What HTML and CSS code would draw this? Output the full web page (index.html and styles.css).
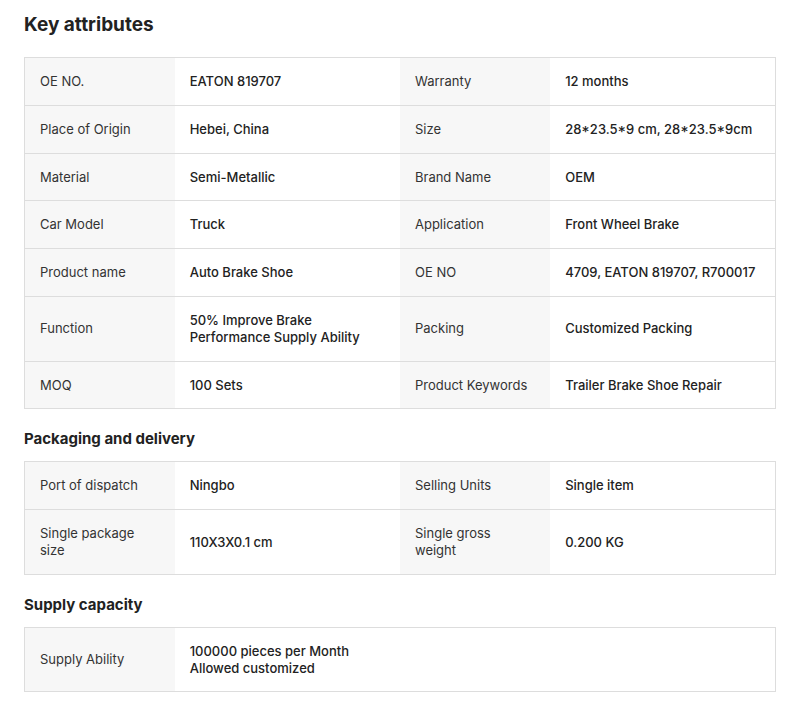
FILE: index.html
```html
<!DOCTYPE html>
<html>
<head>
<meta charset="utf-8">
<link rel="stylesheet" href="styles.css">
</head>
<body>
<div class="page">
  <h1 class="title">Key attributes</h1>
  <table class="attrs">
    <colgroup><col class="c-label"><col class="c-value"><col class="c-label"><col class="c-value"></colgroup>
    <tr><td class="label">OE NO.</td><td class="value">EATON 819707</td><td class="label">Warranty</td><td class="value">12 months</td></tr>
    <tr><td class="label">Place of Origin</td><td class="value">Hebei, China</td><td class="label">Size</td><td class="value">28*23.5*9 cm, 28*23.5*9cm</td></tr>
    <tr><td class="label">Material</td><td class="value">Semi-Metallic</td><td class="label">Brand Name</td><td class="value">OEM</td></tr>
    <tr><td class="label">Car Model</td><td class="value">Truck</td><td class="label">Application</td><td class="value">Front Wheel Brake</td></tr>
    <tr><td class="label">Product name</td><td class="value">Auto Brake Shoe</td><td class="label">OE NO</td><td class="value">4709, EATON 819707, R700017</td></tr>
    <tr><td class="label">Function</td><td class="value">50% Improve Brake Performance Supply Ability</td><td class="label">Packing</td><td class="value">Customized Packing</td></tr>
    <tr><td class="label">MOQ</td><td class="value">100 Sets</td><td class="label">Product Keywords</td><td class="value">Trailer Brake Shoe Repair</td></tr>
  </table>

  <h2 class="section">Packaging and delivery</h2>
  <table class="attrs">
    <colgroup><col class="c-label"><col class="c-value"><col class="c-label"><col class="c-value"></colgroup>
    <tr><td class="label">Port of dispatch</td><td class="value">Ningbo</td><td class="label">Selling Units</td><td class="value">Single item</td></tr>
    <tr><td class="label">Single package size</td><td class="value">110X3X0.1 cm</td><td class="label">Single gross weight</td><td class="value">0.200 KG</td></tr>
  </table>

  <h2 class="section">Supply capacity</h2>
  <table class="attrs">
    <colgroup><col class="c-label"><col class="c-value-wide"></colgroup>
    <tr><td class="label">Supply Ability</td><td class="value">100000 pieces per Month<br>Allowed customized</td></tr>
  </table>
</div>
</body>
</html>
```
FILE: styles.css
```css
html, body {
  margin: 0;
  padding: 0;
  background: #fff;
}
body {
  font-family: Inter, "Noto Sans", "Liberation Sans", sans-serif;
  color: #222;
}
.page {
  padding: 11px 15px 0 24px;
}
.title {
  margin: 0 0 18px;
  font-size: 19px;
  line-height: 28px;
  font-weight: 700;
  color: #222;
}
.section {
  margin: 20px 0 12px;
  font-size: 15px;
  line-height: 20px;
  font-weight: 700;
  color: #222;
}
.attrs {
  width: 752px;
  table-layout: fixed;
  border-collapse: collapse;
  border: 1px solid #ddd;
}
.c-label { width: 150px; }
.c-value { width: 225px; }
.c-value-wide { width: 600px; }
.attrs td {
  border-top: 1px solid #ddd;
  padding: 15px 15px;
  font-size: 13px;
  line-height: 16.8px;
  vertical-align: middle;
}
.attrs .label {
  background: #f7f7f7;
  color: #333;
  font-weight: 400;
}
.attrs .value {
  background: #fff;
  color: #222;
  font-weight: 500;
}
```
